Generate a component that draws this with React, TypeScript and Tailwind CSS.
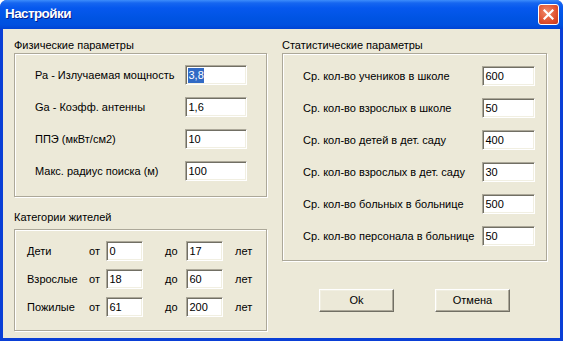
import React from 'react'

const physical = [
  { label: 'Ра - Излучаемая мощность', value: '3,8', selected: true },
  { label: 'Ga - Коэфф. антенны', value: '1,6' },
  { label: 'ППЭ (мкВт/см2)', value: '10' },
  { label: 'Макс. радиус поиска (м)', value: '100' },
]

const stats = [
  { label: 'Ср. кол-во учеников в школе', value: '600' },
  { label: 'Ср. кол-во взрослых в школе', value: '50' },
  { label: 'Ср. кол-во детей в дет. саду', value: '400' },
  { label: 'Ср. кол-во взрослых в дет. саду', value: '30' },
  { label: 'Ср. кол-во больных в больнице', value: '500' },
  { label: 'Ср. кол-во персонала в больнице', value: '50' },
]

const categories = [
  { label: 'Дети', from: '0', to: '17' },
  { label: 'Взрослые', from: '18', to: '60' },
  { label: 'Пожилые', from: '61', to: '200' },
]

function Field({ value, selected, className }: { value: string; selected?: boolean; className: string }) {
  return (
    <div
      className={`h-[20px] bg-white border border-t-[#aca899] border-l-[#aca899] border-r-white border-b-white shadow-[inset_1px_1px_0_#716f64,inset_-1px_-1px_0_#f1efe2] pl-[2px] pt-[2px] flex items-start ${className}`}
    >
      <span className={`leading-[15px] px-[0.5px] ${selected ? 'bg-[#316ac5] text-white' : ''}`}>{value}</span>
    </div>
  )
}

function Button({ children }: { children: React.ReactNode }) {
  return (
    <div className="w-[75px] h-[23px] flex items-center justify-center bg-[#ece9d8] border border-t-white border-l-white border-r-[#716f64] border-b-[#716f64] shadow-[inset_-1px_-1px_0_#aca899,inset_1px_1px_0_#f1efe2]">
      {children}
    </div>
  )
}

const frame = 'border border-[#aca899] shadow-[inset_1px_1px_0_#fff,1px_1px_0_#fff]'

export default function App() {
  return (
    <div className="w-[563px] h-[341px] flex flex-col bg-[#0a3fd6] rounded-t-[7px] overflow-hidden font-['Liberation_Sans',Arial,sans-serif] text-[11px] text-black whitespace-nowrap">
      {/* Title bar */}
      <div className="h-[29px] shrink-0 flex items-center pl-[5px] pr-[4px] bg-[linear-gradient(to_bottom,#3d8dfb_0px,#1666f0_3px,#0658ee_8px,#0054e3_18px,#0050df_25px,#0043d4_29px)]">
        <span className="text-white font-bold text-[13.5px] tracking-[-0.6px] [text-shadow:1px_1px_0_#0a1d8a]">Настройки</span>
        <div className="ml-auto w-[21px] h-[21px] rounded-[3px] border border-white bg-[radial-gradient(circle_at_40%_35%,#f08a6a,#e0502e_60%,#c4381c)] flex items-center justify-center">
          <svg width="11" height="11" viewBox="0 0 11 11">
            <path d="M1.5 1.5 L9.5 9.5 M9.5 1.5 L1.5 9.5" stroke="#fff" strokeWidth="2.2" strokeLinecap="square" />
          </svg>
        </div>
      </div>

      {/* Client area */}
      <div className="flex-1 mx-[3px] mb-[3px] bg-[#ece9d8] flex pl-[11px] pt-[8px] gap-[15px]">
        {/* Left column */}
        <div className="w-[253px] flex flex-col">
          <div className="h-[16px] leading-[16px]">Физические параметры</div>
          <div className={`h-[144px] ${frame} pt-[11px] pl-[20px] flex flex-col gap-[12px]`}>
            {physical.map(r => (
              <div key={r.label} className="flex items-center h-[20px]">
                <span className="w-[150px]">{r.label}</span>
                <Field value={r.value} selected={r.selected} className="w-[62px]" />
              </div>
            ))}
          </div>

          <div className="mt-[12px] mb-[4px] h-[16px] leading-[16px]">Категории жителей</div>
          <div className={`h-[102px] ${frame} pt-[11px] pl-[12px] flex flex-col gap-[8px]`}>
            {categories.map(c => (
              <div key={c.label} className="flex items-center h-[20px]">
                <span className="w-[62px]">{c.label}</span>
                <span className="w-[17px]">от</span>
                <Field value={c.from} className="w-[37px]" />
                <span className="w-[22px]" />
                <span className="w-[21px]">до</span>
                <Field value={c.to} className="w-[37px]" />
                <span className="w-[12px]" />
                <span>лет</span>
              </div>
            ))}
          </div>
        </div>

        {/* Right column */}
        <div className="w-[265px] flex flex-col">
          <div className="h-[16px] leading-[16px]">Статистические параметры</div>
          <div className={`h-[208px] ${frame} pt-[12px] pl-[20px] flex flex-col gap-[12px]`}>
            {stats.map(r => (
              <div key={r.label} className="flex items-center h-[20px]">
                <span className="w-[179px]">{r.label}</span>
                <Field value={r.value} className="w-[53px]" />
              </div>
            ))}
          </div>
          <div className="mt-[28px] flex justify-center gap-[41px]">
            <Button>Ok</Button>
            <Button>Отмена</Button>
          </div>
        </div>
      </div>
    </div>
  )
}
